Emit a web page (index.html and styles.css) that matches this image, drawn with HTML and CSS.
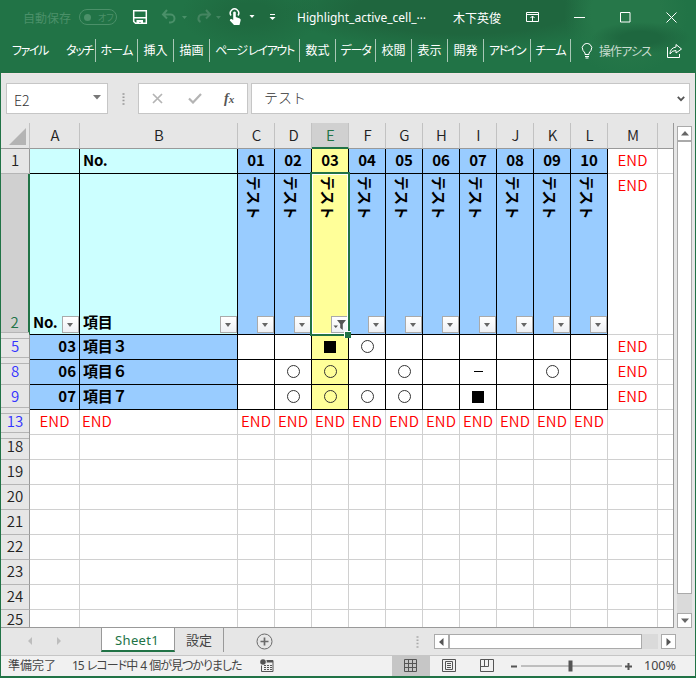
FILE: index.html
```html
<!DOCTYPE html>
<html lang="ja">
<head>
<meta charset="utf-8">
<title>Highlight_active_cell</title>
<link rel="stylesheet" href="styles.css">
</head>
<body>
<div class="window">
  <header class="top">
    <div class="titlebar">
      <span class="autosave">自動保存</span>
      <span class="toggle"><i></i><b>オフ</b></span>
      <svg class="save" width="16" height="16" viewBox="0 0 16 16"><path d="M1.7 1.700h12.600v12.600H3.500L1.700 12.500z" fill="none" stroke="#fff" stroke-width="1.500"/><path d="M1 8h14v1.400H1zM4.500 11H11v4H9v-2H7v2H4.500z" fill="#fff"/></svg>
      <svg class="undo" width="27" height="16" viewBox="0 0 27 16"><path d="M6 1 2 5.500l4 4M2.500 5.500h7a4 4 0 0 1 0 8H8" fill="none" stroke="#4a9069" stroke-width="2"/><path d="M21 7h5l-2.500 3z" fill="#4a9069"/></svg>
      <svg class="redo" width="27" height="16" viewBox="0 0 27 16"><path d="m10 1 4 4.500-4 4M13.500 5.500h-7a4 4 0 0 0-2 7.500" fill="none" stroke="#448561" stroke-width="2"/><path d="M20 7h5l-2.500 3z" fill="#448561"/></svg>
      <svg class="touch" width="26" height="18" viewBox="0 0 26 18"><path d="M2 7.500A4.200 4.200 0 1 1 9 7.500" fill="none" stroke="#fff" stroke-width="1.500"/><path d="M4.200 4.200q1.400-1.500 2.600 0V9l4 1.500q1.200.6.800 2L10.500 17H5L.8 12.500q0-2 1.700-1.500l1.700 1z" fill="#fff"/><path d="M20.500 7h5L23 10z" fill="#fff"/></svg>
      <svg class="more" width="7" height="7" viewBox="0 0 7 7"><path d="M1 .5h5" stroke="#fff"/><path d="M.5 3h6l-3 3z" fill="#fff"/></svg>
      <span class="doc">Highlight_active_cell_<em>…</em></span>
      <span class="user">木下英俊</span>
      <svg class="ribbon-toggle" width="14" height="12" viewBox="0 0 14 12"><path d="M.5 1.500h12v9H.5zM.5 3.500h12M6.500 10V5M4.500 7l2-2 2 2" fill="none" stroke="#fff"/></svg>
      <svg class="min" width="11" height="12" viewBox="0 0 11 12"><path d="M0 6.500h11" stroke="#fff"/></svg>
      <svg class="max" width="11" height="11" viewBox="0 0 11 11"><path d="M.5.5h9.500v9.500H.5z" fill="none" stroke="#fff"/></svg>
      <svg class="close" width="11" height="11" viewBox="0 0 11 11"><path d="m.5.5 10 10M10.500.5l-10 10" stroke="#fff"/></svg>
    </div>
    <nav class="ribbon">
      <span class="file">ファイル</span><span class="w37">タッチ</span><span class="w42">ホーム</span><span class="w36">挿入</span><span class="w36">描画</span><span class="w90">ページ レイアウト</span><span class="w36">数式</span><span class="w40">データ</span><span class="w36">校閲</span><span class="w36">表示</span><span class="w36">開発</span><span class="w47">アドイン</span><span class="w40">チーム</span>
      <svg class="bulb" width="12" height="16" viewBox="0 0 12 16"><path d="M4 11.500V10L2 7.500a4.700 4.700 0 1 1 8 0L8 10v1.500zM4 13.500h4M4.500 15h3" fill="none" stroke="#fff"/></svg>
      <b class="assist">操作アシス</b>
      <svg class="share" width="17" height="16" viewBox="0 0 17 16"><path d="M1.500 4v10.500h12V11M10 1.500l5.500 4.500-5.500 4V7.500Q6 7.300 4 11q0-6 6-7z" fill="none" stroke="#fff"/></svg>
    </nav>
  </header>

  <section class="formula">
    <div class="namebox"><span>E2</span><svg width="8" height="5" viewBox="0 0 8 5"><path d="M0 0h8L4 4.500z" fill="#777"/></svg></div>
    <svg class="dots" width="3" height="12" viewBox="0 0 3 12"><path d="M.5 1h2M.5 4.300h2M.5 7.600h2M.5 10.900h2" stroke="#999" stroke-width="1.500"/></svg>
    <div class="fxbox">
      <svg width="11" height="11" viewBox="0 0 11 11"><path d="m1 1 9 9M10 1l-9 9" stroke="#b4b4b4" stroke-width="1.700"/></svg>
      <svg width="14" height="11" viewBox="0 0 14 11"><path d="m1 5.500 4 4L13 1" fill="none" stroke="#b4b4b4" stroke-width="2.200"/></svg>
      <span class="fx">f<small>x</small></span>
    </div>
    <div class="input"><span>テスト</span><svg width="8" height="6" viewBox="0 0 8 6"><path d="m.8.8 3.200 3.400L7.200.8" fill="none" stroke="#555" stroke-width="1.800"/></svg></div>
  </section>

  <main class="body">
    <div class="sheet">
      <table>
        <colgroup><col class="c-h"><col class="c-a"><col class="c-b"><col span="10" class="c-n"><col class="c-a"><col class="c-e"></colgroup>
        <tr class="cols"><th><svg class="corner" width="17" height="17" viewBox="0 0 17 17"><path d="M17 0v17H0z" fill="#b4b4b4"/></svg></th><th>A</th><th>B</th><th>C</th><th>D</th><th class="on">E</th><th>F</th><th>G</th><th>H</th><th>I</th><th>J</th><th>K</th><th>L</th><th>M</th><th></th></tr>
        <tr class="r head"><th>1</th><td class="cy"></td><td class="cy l">No.</td><td>01</td><td>02</td><td class="y">03</td><td>04</td><td>05</td><td>06</td><td>07</td><td>08</td><td>09</td><td>10</td><td class="p end">END</td><td class="p"></td></tr>
        <tr class="r head tall"><th class="on">2</th><td class="cy l low">No.<i class="dd"></i></td><td class="cy l low">項目<i class="dd"></i></td><td class="v"><span>テスト</span><i class="dd"></i></td><td class="v"><span>テスト</span><i class="dd"></i></td><td class="v y active"><span>テスト</span><i class="dd filtered"><svg width="15" height="15" viewBox="0 0 15 15"><path d="M5 3h9L10.800 7v6L8.200 11V7zM1.500 8.500h4.500L3.800 11z" fill="#555"/></svg></i></td><td class="v"><span>テスト</span><i class="dd"></i></td><td class="v"><span>テスト</span><i class="dd"></i></td><td class="v"><span>テスト</span><i class="dd"></i></td><td class="v"><span>テスト</span><i class="dd"></i></td><td class="v"><span>テスト</span><i class="dd"></i></td><td class="v"><span>テスト</span><i class="dd"></i></td><td class="v"><span>テスト</span><i class="dd"></i></td><td class="p end">END</td><td class="p"></td></tr>
        <tr class="r data"><th class="b gap">5</th><td class="bl n">03</td><td class="bl l">項目３</td><td></td><td></td><td class="y"><i class="sq"></i></td><td><i class="o"></i></td><td></td><td></td><td></td><td></td><td></td><td></td><td class="p end">END</td><td class="p"></td></tr>
        <tr class="r data"><th class="b gap">8</th><td class="bl n">06</td><td class="bl l">項目６</td><td></td><td><i class="o"></i></td><td class="y"><i class="o"></i></td><td></td><td><i class="o"></i></td><td></td><td><i class="dash"></i></td><td></td><td><i class="o"></i></td><td></td><td class="p end">END</td><td class="p"></td></tr>
        <tr class="r data"><th class="b">9</th><td class="bl n">07</td><td class="bl l">項目７</td><td></td><td><i class="o"></i></td><td class="y"><i class="o"></i></td><td><i class="o"></i></td><td><i class="o"></i></td><td></td><td><i class="sq"></i></td><td></td><td></td><td></td><td class="p end">END</td><td class="p"></td></tr>
        <tr class="r end"><th class="b gap">13</th><td>END</td><td class="l">END</td><td>END</td><td>END</td><td>END</td><td>END</td><td>END</td><td>END</td><td>END</td><td>END</td><td>END</td><td>END</td><td></td><td></td></tr>
        <tr class="r"><th class="gap">18</th><td></td><td></td><td></td><td></td><td></td><td></td><td></td><td></td><td></td><td></td><td></td><td></td><td></td><td></td></tr>
        <tr class="r"><th>19</th><td></td><td></td><td></td><td></td><td></td><td></td><td></td><td></td><td></td><td></td><td></td><td></td><td></td><td></td></tr>
        <tr class="r"><th>20</th><td></td><td></td><td></td><td></td><td></td><td></td><td></td><td></td><td></td><td></td><td></td><td></td><td></td><td></td></tr>
        <tr class="r"><th>21</th><td></td><td></td><td></td><td></td><td></td><td></td><td></td><td></td><td></td><td></td><td></td><td></td><td></td><td></td></tr>
        <tr class="r"><th>22</th><td></td><td></td><td></td><td></td><td></td><td></td><td></td><td></td><td></td><td></td><td></td><td></td><td></td><td></td></tr>
        <tr class="r"><th>23</th><td></td><td></td><td></td><td></td><td></td><td></td><td></td><td></td><td></td><td></td><td></td><td></td><td></td><td></td></tr>
        <tr class="r"><th>24</th><td></td><td></td><td></td><td></td><td></td><td></td><td></td><td></td><td></td><td></td><td></td><td></td><td></td><td></td></tr>
        <tr class="r last"><th>25</th><td></td><td></td><td></td><td></td><td></td><td></td><td></td><td></td><td></td><td></td><td></td><td></td><td></td><td></td></tr>
      </table>
    </div>
    <div class="vscroll">
      <span class="btn"><svg width="8" height="5" viewBox="0 0 8 5"><path d="M0 4.500h8L4 0z" fill="#666"/></svg></span>
      <span class="thumb"></span><span class="track"></span>
      <span class="btn"><svg width="8" height="5" viewBox="0 0 8 5"><path d="M0 .5h8L4 5z" fill="#666"/></svg></span>
    </div>
  </main>

  <section class="tabs">
    <svg class="navs" width="34" height="8" viewBox="0 0 34 8"><path d="M4 0v8L0 4zM29 0v8l4-4z" fill="#bdbdbd"/></svg>
    <span class="tab current">Sheet1</span><span class="tab">設定</span>
    <svg class="add" width="17" height="17" viewBox="0 0 17 17"><circle cx="8.500" cy="8.500" r="7.500" fill="none" stroke="#6a6a6a"/><path d="M8.500 4.500v8M4.500 8.500h8" stroke="#6a6a6a" stroke-width="1.700"/></svg>
    <svg class="tdots" width="3" height="12" viewBox="0 0 3 12"><path d="M.5 1h2M.5 4.300h2M.5 7.600h2M.5 10.900h2" stroke="#aaa" stroke-width="1.500"/></svg>
    <div class="hscroll">
      <span class="btn"><svg width="5" height="8" viewBox="0 0 5 8"><path d="M4.500 0v8L0 4z" fill="#555"/></svg></span>
      <span class="thumb"></span><span class="track"></span>
      <span class="btn"><svg width="5" height="8" viewBox="0 0 5 8"><path d="M.5 0v8L5 4z" fill="#555"/></svg></span>
    </div>
  </section>

  <footer class="status">
    <span class="ready">準備完了</span>
    <span class="found">15 レコード中 4 個が見つかりました</span>
    <svg class="macro" width="14" height="14" viewBox="0 0 14 14"><circle cx="3" cy="3" r="2.800" fill="#555"/><path d="M6.500 1.500H13v11H1.500v-6M6.500 3h6.500" fill="none" stroke="#555"/><path d="M7 2.500h6M4 6.500h2M7 6.500h2M10 6.500h2M4 8.500h2M7 8.500h2M10 8.500h2M4 10.500h2M7 10.500h2M10 10.500h2" stroke="#555"/></svg>
    <span class="view sel"><svg width="14" height="14" viewBox="0 0 14 14"><path d="M.5.5h12v12H.5zM4.500.5v12M8.500.5v12M.5 4.500h12M.5 8.500h12" fill="none" stroke="#555"/></svg></span>
    <span class="view"><svg width="14" height="14" viewBox="0 0 14 14"><path d="M.5.5h13v12H.5zM3.500 2.500h7v8h-7zM5 4.500h4M5 6.500h4M5 8.500h4" fill="none" stroke="#555"/></svg></span>
    <span class="view"><svg width="14" height="14" viewBox="0 0 14 14"><path d="M.5.5h13v12H.5zM.5 7.500h8M4.500.5v7M8.500.5v7" fill="none" stroke="#555"/></svg></span>
    <svg class="zoom" width="122" height="12" viewBox="0 0 122 12"><path d="M10 6h101" stroke="#8c8c8c"/><path d="M0 6.500h6M114 6.500h7M117.500 3v7" stroke="#555" stroke-width="2"/><path d="M57.500.5h4v11h-4z" fill="#555"/></svg>
    <span class="pct">100%</span>
  </footer>
</div>
</body>
</html>
```
FILE: styles.css
```css
* { box-sizing: border-box; }
body { margin: 0; font-family: "Noto Sans", "Noto Sans CJK JP", sans-serif; }
svg { display: block; flex: none; }
i, em { font-style: normal; }
.window { width: 696px; height: 678px; border: solid #217346; border-width: 0 1px 2px; background: #e6e6e6; overflow: hidden; display: flex; flex-direction: column; }

.top { height: 73px; flex: none; color: #fff; font-size: 12px; font-family: "Noto Sans CJK JP", sans-serif; font-feature-settings: "palt";
  background:
    radial-gradient(ellipse 50px 16px at 640px 38px, #1e673f 40%, transparent 100%),
    radial-gradient(circle at 625px 14px, #267749 35px, transparent 62px),
    radial-gradient(ellipse 180px 40px at 462px 10px, #1f663e 60%, transparent 100%),
    radial-gradient(ellipse 70px 36px at 250px 14px, #1f6a40 30%, transparent 100%), #217346; }
.titlebar { height: 34px; display: flex; align-items: center; padding: 0 0 0 22px; white-space: nowrap; }
.autosave { width: 56px; color: #4b9069; }
.toggle { width: 38px; height: 16px; border: 1px solid #4b9069; border-radius: 8px; display: flex; align-items: center; padding-left: 4px; gap: 7px; color: #4b9069; font-size: 9px; }
.toggle i { width: 7px; height: 7px; border-radius: 50%; background: #4b9069; }
.toggle b { font-weight: 400; }
.save { margin-left: 15px; }
.undo { margin-left: 13px; }
.redo { margin-left: 8px; }
.touch { margin-left: 6px; }
.more { margin-left: 14px; }
.doc { margin-left: 21px; width: 140px; margin-right: 16px; font-family: "Noto Sans", sans-serif; font-size: 12px; display: flex; }
.doc em { position: relative; top: -3px; }
.user { width: 50px; }
.ribbon-toggle { margin-left: 23px; }
.min { margin-left: 34px; }
.max { margin-left: 35px; }
.close { margin-left: 35px; }
.ribbon { height: 33px; display: flex; align-items: center; white-space: nowrap; }
.ribbon span { height: 23px; line-height: 22px; text-align: center; border-right: 1px solid #a9c8b6; flex: none; }
.ribbon .file { width: 58px; border: 0; padding-right: 0; letter-spacing: -1.4px; }
.ribbon .w37 { width: 37px; letter-spacing: -1.400px; padding-left: 5px; }
.ribbon .w42 { width: 42px; letter-spacing: -.7px; }
.w36 { width: 36px; }
.ribbon .w90 { width: 90px; letter-spacing: -1.300px; }
.ribbon .w40 { width: 40px; letter-spacing: -1.100px; }
.ribbon .w36 + .w40 { width: 40px; }
.ribbon .w47 { width: 47px; letter-spacing: -1.400px; }
.bulb { margin-left: 10px; }
.assist { margin-left: 6px; width: 50px; font-weight: 400; color: #c8dcd0; letter-spacing: -.9px; }
.share { margin-left: 17px; }

.formula { height: 50px; flex: none; border-top: 1px solid #f3e4e6; display: flex; padding: 9px 0 0 5px; }
.formula > div { height: 31px; background: #fff; border: 1px solid #c6c6c6; display: flex; align-items: center; }
.namebox { width: 102px; padding: 3px 6px 0 7px; justify-content: space-between; font: 300 14px "Noto Sans CJK JP", sans-serif; color: #333; }
.namebox svg { margin-top: -5px; }
.dots { margin: 10px 13px 0 14px; }
.fxbox { width: 110px; padding-left: 13px; gap: 25px; }
.fx { font: italic 700 14px/20px "Liberation Serif", serif; color: #555; margin-left: -3px; }
.fx small { font-size: 11px; }
.formula .input { width: 439px; margin-left: 3px; padding: 0 4px 0 12px; justify-content: space-between; font: 300 14px/20px "Noto Sans CJK JP", sans-serif; color: #333; }
.input span { margin-top: -4px; }

.body { height: 505px; flex: none; display: flex; }
.sheet { width: 673px; height: 505px; overflow: hidden; border-right: 1px solid #999; border-bottom: 1px solid #999; }
table { table-layout: fixed; width: 673px; border-collapse: separate; border-spacing: 0; font: 350 15px/22px "Noto Sans CJK JP", sans-serif; }
.c-h { width: 29px; }
.c-a { width: 50px; }
.c-b { width: 158px; }
.c-n { width: 37px; }
.c-e { width: 16px; }
th, td { padding: 0 0 2px; height: 25px; white-space: nowrap; text-align: center; vertical-align: middle; border: solid #d0d0d0; border-width: 0 1px 1px 0; position: relative; }
td { background: #fff; }
th { font-weight: 350; background: #e6e6e6; border-color: #b5b5b5; color: #222; }
.cols th { height: 26px; border-bottom-color: #999; border-right-color: #c2c2c2; padding-left: 1px; }
.cols th:last-child { border-right: 0; }
.corner { margin: 4px 0 0 7px; }
.r th { border-right-color: #999; }
.r th.b { color: #33f; }
.r.last th, .r.last td { height: 17px; padding: 0; line-height: 16px; border-bottom: 0; }
.cols th.on, .r th.on { background: #d0d0d0; color: #217346; }
.cols th.on { border-bottom: 2px solid #217346; padding-bottom: 1px; }
.r th.on { border-right: 2px solid #217346; vertical-align: bottom; padding-bottom: 1px; }
.gap::before { content: ""; position: absolute; z-index: 1; left: 0; right: 0; top: -3px; height: 5px; background: #e6e6e6; border: solid #b5b5b5; border-width: 1px 0; }
.head td { background: #9cf; border-color: #000; font-weight: 700; }
.data td { border-color: #000; }
.head .cy { background: #cff; }
.head .y, .data .y { background: #ff9; }
.data .bl { background: #9cf; font-weight: 700; }
.r .l { text-align: left; padding-left: 3px; letter-spacing: -.3px; }
.r .n { text-align: right; padding-right: 3px; }
.r.end .l { padding-left: 2px; letter-spacing: 0; }
.head .p, .data .p { background: #fff; border-color: #d0d0d0; font-weight: 350; }
.end { color: #f00; }
.r.end td { color: #f00; }
.tall td, .tall th { height: 161px; vertical-align: top; }
.tall .low { vertical-align: bottom; padding-bottom: 1px; }
.tall .v { text-align: left; }
.v span { display: block; writing-mode: vertical-rl; text-orientation: sideways; font-size: 14.500px; line-height: 18px; margin: 2px 0 0 7px; width: 18px; }
.dd { position: absolute; right: 0; bottom: 1px; width: 17px; height: 17px; border: 1px solid #aaa; background: linear-gradient(#fff, #eef0f4); }
.dd::after { content: ""; position: absolute; left: 4px; top: 6px; border: solid transparent; border-width: 4px 3.500px 0; border-top-color: #666; }
.dd.filtered::after { display: none; }
.active::before { content: ""; position: absolute; z-index: 2; left: -2px; top: -2px; right: -2px; bottom: -2px; border: 2px solid #217346; box-shadow: inset 0 0 0 1px #fff; pointer-events: none; }
.active::after { content: ""; position: absolute; z-index: 3; right: -3px; bottom: -4px; width: 6px; height: 6px; background: #217346; border: solid #fff; border-width: 1px 0 0 1px; }
.o, .sq, .dash { display: block; margin: 1px auto 0; }
.o { width: 13px; height: 13px; border: 1px solid #333; border-radius: 50%; }
.sq { width: 12px; height: 12px; background: #000; }
.dash { width: 9px; height: 1px; background: #000; }

.btn { width: 15px; height: 15px; flex: none; background: #fff; border: 1px solid #aaa; display: flex; align-items: center; justify-content: center; }
.vscroll { width: 15px; margin: 3px 0 0 3px; height: 502px; display: flex; flex-direction: column; }
.vscroll .thumb { height: 453px; background: #fff; border: 1px solid #aaa; }
.vscroll .track { flex: 1; background: #dadada; }

.tabs { height: 27px; flex: none; display: flex; }
.navs { margin: 9px 0 0 27px; }
.tab { height: 24px; width: 49px; text-align: center; font: 13px/25px "Noto Sans", "Noto Sans CJK JP", sans-serif; color: #444; border-right: 1px solid #999; }
.tab.current { margin-left: 39px; width: 74px; padding-right: 2px; letter-spacing: .3px; color: #217346; background: #fff; border: 1px solid #999; border-width: 0 1px 2px; border-bottom-color: #217346; }
.add { margin: 5px 0 0 32px; }
.tdots { margin: 8px 0 0 143px; }
.hscroll { margin: 6px 0 0 15px; display: flex; width: 242px; height: 15px; }
.hscroll .thumb { width: 193px; background: #fff; border: 1px solid #aaa; }
.hscroll .track { flex: 1; background: #dadada; margin-right: 3px; }

.status { height: 21px; flex: none; border-top: 1px solid #c6c6c6; background: #f1f1f1; display: flex; align-items: center; font: 12px/20px "Noto Sans", "Noto Sans CJK JP", sans-serif; color: #444; white-space: nowrap; font-feature-settings: "palt"; }
.ready { margin-left: 7px; width: 64px; }
.found { width: 188px; letter-spacing: -1px; word-spacing: 1px; }
.view { width: 38px; height: 20px; display: flex; align-items: center; justify-content: center; }
.view.sel { background: #c6c6c6; margin-left: 118px; }
.zoom { margin-left: 5px; }
.pct { margin-left: 11px; font-size: 12.500px; }
```
